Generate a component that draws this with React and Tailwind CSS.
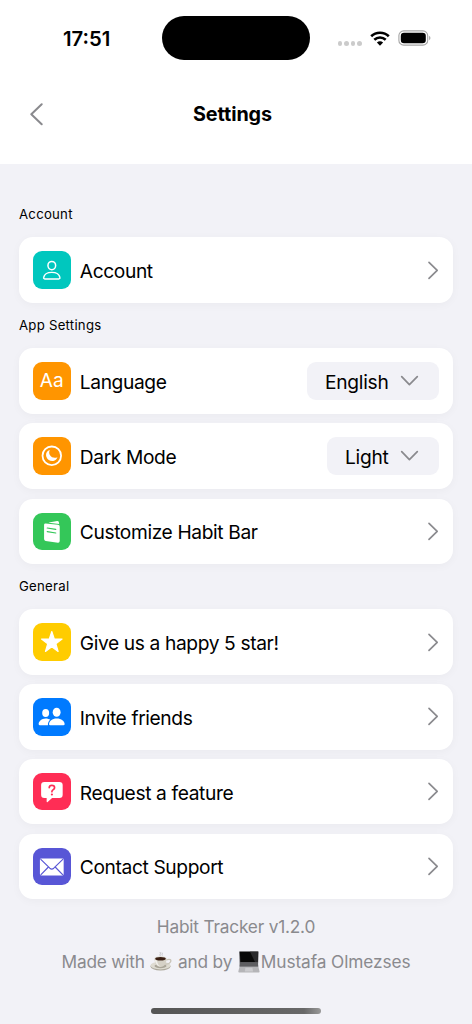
const BackIcon = () => (
  <svg className="w-[14px] h-[23px]" viewBox="0 0 14 23" fill="none" stroke="#8a8a8e" strokeWidth="2" strokeLinecap="round" strokeLinejoin="round">
    <path d="M12.7 1.2 L2.3 11.2 L12.7 21.3" />
  </svg>
)

const ChevronRight = () => (
  <svg className="w-3 h-[19px] shrink-0" viewBox="0 0 12 19" fill="none" stroke="#8a8a8e" strokeWidth="1.7" strokeLinecap="round" strokeLinejoin="round">
    <path d="M2 1.3 L10.2 9.3 L2 17.3" />
  </svg>
)

const ChevronDown = () => (
  <svg className="w-[19px] h-3 shrink-0" viewBox="0 0 19 12" fill="none" stroke="#8a8a8e" strokeWidth="1.7" strokeLinecap="round" strokeLinejoin="round">
    <path d="M1.7 1.6 L9.4 9.6 L17.3 1.6" />
  </svg>
)

// All tile icons share a 38x38 box
const PersonIcon = () => (
  <svg className="size-full" viewBox="0 0 38 38" fill="none" stroke="#fff" strokeWidth="1.5">
    <ellipse cx="19" cy="14.7" rx="3.9" ry="4.2" />
    <path d="M11.9 28.2 C11 28.2 10.6 27.5 10.8 26.7 C11.4 23.7 14.6 21.6 19 21.6 C23.4 21.6 26.6 23.7 27.2 26.7 C27.4 27.5 27 28.2 26.1 28.2 Z" />
  </svg>
)

const MoonIcon = () => (
  <svg className="size-full" viewBox="0 0 38 38" fill="none">
    <circle cx="19" cy="19" r="9.4" stroke="#fff" strokeWidth="1.8" />
    <path d="M17 13.2 C13.6 14.2 12.6 17.5 13.6 20.3 C15 24.2 20 25.5 23.1 22.9 C23.9 22.2 24.4 21.4 24.7 20.5 C21.9 21.7 18.6 20.9 17.2 18.5 C16.1 16.7 16.1 14.7 17 13.2 Z" fill="#fff" />
  </svg>
)

const PagesIcon = () => (
  <svg className="size-full" viewBox="0 0 38 38" fill="none">
    <path d="M16 9.6 L24.4 8 Q25.8 7.8 26.1 9.2 L26.5 11.1 L16 9.9 Z" fill="#fff" />
    <path d="M11.2 12 Q11.2 10.4 12.8 10.5 L25.2 11.9 Q27 12.2 27 13.8 L27 28.3 Q26.9 30.2 25.2 30 L12.8 28.2 Q11.2 28 11.2 26.3 Z" fill="#fff" />
    <path d="M14.4 15.2 L23 16.5 M14.4 18.9 L23 20.2" stroke="#34c759" strokeWidth="1.2" strokeLinecap="round" />
  </svg>
)

const StarIcon = () => (
  <svg className="size-full" viewBox="0 0 38 38" fill="#fff" stroke="#fff" strokeWidth="1.2" strokeLinejoin="round">
    <path d="M19 8.6 L21.5 16.1 L29.4 16.2 L23.1 20.9 L25.4 28.7 L19 24.1 L12.6 28.7 L14.9 20.9 L8.6 16.2 L16.5 16.1 Z" />
  </svg>
)

const FriendsIcon = () => (
  <svg className="size-full" viewBox="0 0 38 38" fill="#fff">
    <ellipse cx="12.8" cy="15.2" rx="3.5" ry="4" />
    <path d="M5.7 26.2 C5.7 23.6 8.7 20.6 12.8 20.6 C14.7 20.6 16.3 21.2 17.4 22 C15.7 23.4 14.9 25.2 15.1 27.6 L7 27.6 Q5.7 27.5 5.7 26.2 Z" />
    <ellipse cx="23.9" cy="14.4" rx="4" ry="4.6" />
    <path d="M16.2 26.2 C16.4 23.3 19.3 20.6 24 20.6 C28.8 20.6 31.8 23.3 32 26.2 Q32 27.5 30.7 27.6 L17.5 27.6 Q16.2 27.5 16.2 26.2 Z" />
  </svg>
)

const QuestionIcon = () => (
  <svg className="size-full" viewBox="0 0 38 38" fill="#fff">
    <path d="M11.5 9 L26.7 9 Q30 9 30 12.2 L30 22 Q30 25.2 26.7 25.2 L19.3 25.2 L14.8 29.2 Q13.8 29.9 13.8 28.6 L13.8 25.2 L11.5 25.2 Q8.2 25.2 8.2 22 L8.2 12.2 Q8.2 9 11.5 9 Z" />
    <path d="M16.4 14.8 C16.5 13.2 17.6 12.6 19 12.6 C20.7 12.6 21.8 13.4 21.8 14.8 C21.8 16.9 19.1 16.6 19.1 18.9" fill="none" stroke="#ff2d55" strokeWidth="1.7" strokeLinecap="round" />
    <circle cx="19.1" cy="21.7" r="1.1" fill="#ff2d55" />
  </svg>
)

const MailIcon = () => (
  <svg className="size-full" viewBox="0 0 38 38" fill="none">
    <rect x="7" y="10.7" width="24" height="17" rx="1.3" fill="#fff" />
    <path d="M7.6 11.3 L17 20.4 Q19 22.1 21 20.4 L30.4 11.3 M7.8 27.2 L15.6 19.2 M30.2 27.2 L22.4 19.2" stroke="#5856d6" strokeWidth="1.2" />
  </svg>
)

const CoffeeIcon = () => (
  <svg className="ml-px mr-px h-[22px] w-[22px] shrink-0" viewBox="0 0 22 22" fill="none">
    <path d="M10.5 5 C8.5 3.6 11.8 2.8 9.9 1 M12.3 4.6 C11.4 3.5 13 2.8 12 1.6" stroke="#b9b9bc" strokeWidth=".8" />
    <ellipse cx="10.5" cy="15.4" rx="10" ry="4.2" fill="#aaa69a" />
    <ellipse cx="10.5" cy="14.6" rx="10" ry="3.9" fill="#dedbd1" />
    <ellipse cx="10.5" cy="15" rx="6" ry="2.2" fill="#a9a598" />
    <path d="M16.2 9 C20 7.3 22 9 20.2 11.3 C19 12.9 17 13.2 15 13" stroke="#c9c5b9" strokeWidth="1.3" />
    <path d="M4.5 7.6 C4.5 12.3 6.5 16 10.5 16 C14.5 16 16.5 12.3 16.5 7.6 Z" fill="#d5d1c6" />
    <path d="M7 9.6 C7.5 13 8.5 14.7 10.5 15.4 C7.2 15.4 5.2 12.5 4.8 8.6 Z" fill="#f1efe9" />
    <ellipse cx="10.5" cy="7.6" rx="6.1" ry="2.4" fill="#dedbd2" />
    <ellipse cx="10.5" cy="7.7" rx="5.3" ry="1.8" fill="#3b2014" />
  </svg>
)

const LaptopIcon = () => (
  <svg className="ml-px mr-px h-[22px] w-[22px] shrink-0" viewBox="0 0 22 22">
    <path d="M1.2 0.4 H20.6 L20 15.5 H1.8 Z" fill="#4e4e50" />
    <path d="M1.8 0.8 H20 L19.4 11 H2.4 Z" fill="#080808" />
    <path d="M12 0.8 H20 L19.4 11 H17 Z" fill="#29292b" />
    <path d="M2.2 11.2 H19.7 L20.4 15.8 H1.5 Z" fill="#5e5e61" />
    <path d="M1.5 15.8 H20.4 L21.6 20.6 Q21.6 21.6 20.7 21.6 H1.2 Q0.3 21.6 0.3 20.6 Z" fill="#b5b5b8" />
    <path d="M7.4 16.8 H14.4 L15 20.6 H6.8 Z" fill="#cbcbce" />
  </svg>
)

const sections = [
  {
    title: 'Account',
    gap: 'gap-[9.6px]',
    rows: [{ label: 'Account', color: 'bg-[#00c7be]', icon: <PersonIcon /> }],
  },
  {
    title: 'App Settings',
    gap: 'gap-[9.6px]',
    rows: [
      {
        label: 'Language',
        color: 'bg-[#ff9500]',
        icon: <span className="pt-px text-[19px] text-white tracking-[0.1px]">Aa</span>,
        value: 'English',
      },
      { label: 'Dark Mode', color: 'bg-[#ff9500]', icon: <MoonIcon />, value: 'Light' },
      { label: 'Customize Habit Bar', color: 'bg-[#34c759]', icon: <PagesIcon /> },
    ],
  },
  {
    title: 'General',
    gap: 'gap-[9.1px]',
    rows: [
      { label: 'Give us a happy 5 star!', color: 'bg-[#ffcc00]', icon: <StarIcon /> },
      { label: 'Invite friends', color: 'bg-[#007aff]', icon: <FriendsIcon /> },
      { label: 'Request a feature', color: 'bg-[#ff2d55]', icon: <QuestionIcon /> },
      { label: 'Contact Support', color: 'bg-[#5856d6]', icon: <MailIcon /> },
    ],
  },
]

function StatusBar() {
  return (
    <div className="flex h-[76px] items-center">
      <div className="w-[162px] pl-[63px] pt-[2px] text-[20.3px] font-semibold">17:51</div>
      <div className="h-11 w-[148px] rounded-full bg-black" />
      <div className="ml-7 mt-[11px] flex gap-[2px]">
        {[0, 1, 2, 3].map((i) => (
          <span key={i} className="size-[4.4px] rounded-full bg-[#cbcbcb]" />
        ))}
      </div>
      <svg className="ml-2 h-[15px] w-5" viewBox="0 0 20 15" fill="none" stroke="#000" strokeWidth="2.6">
        <path d="M1.2 5.2 C6 0.6 14 0.6 18.8 5.2" />
        <path d="M4.3 8.8 C7.5 5.8 12.5 5.8 15.7 8.8" />
        <path d="M6.9 11.5 C8.7 9.9 11.3 9.9 13.1 11.5 L10 14.8 Z" fill="#000" stroke="none" />
      </svg>
      <svg className="ml-2 h-4 w-[33px]" viewBox="0 0 33 16" fill="none">
        <rect x="0.9" y="0.9" width="28.8" height="14.2" rx="4.7" stroke="#a5a5a5" strokeWidth="1.1" />
        <rect x="2.8" y="2.7" width="25" height="10.6" rx="3.2" fill="#000" />
        <path d="M31.1 5.8 C32.9 6.6 32.9 9.4 31.1 10.2 Z" fill="#a5a5a5" />
      </svg>
    </div>
  )
}

function Row({ label, color, icon, value }) {
  return (
    <div className="flex h-[65.7px] items-center rounded-[14px] bg-white px-[14px] shadow-[0_2px_10px_rgba(0,0,0,0.035)]">
      <div className={`flex size-[37.6px] shrink-0 items-center justify-center rounded-[9px] ${color}`}>{icon}</div>
      <span className="ml-[9.2px] flex-1 whitespace-nowrap pt-[2.6px] text-[19.2px] tracking-[-0.38px]">{label}</span>
      {value ? (
        <button className="flex h-[37.6px] items-center gap-[11.5px] rounded-[9px] bg-[#f2f2f7] pl-[18px] pr-5">
          <span className="pt-[2.6px] text-[19.2px] tracking-[-0.28px]">{value}</span>
          <ChevronDown />
        </button>
      ) : (
        <ChevronRight />
      )}
    </div>
  )
}

export default function App() {
  return (
    <div className="flex h-[1024px] w-[472px] flex-col overflow-hidden bg-[#f2f2f7] font-[Inter,sans-serif] text-black">
      <header className="h-[164px] shrink-0 bg-white">
        <StatusBar />
        <div className="flex h-[76px] items-center pl-[29px] pr-9">
          <div className="w-10">
            <BackIcon />
          </div>
          <h1 className="flex-1 pt-[2px] text-center text-[19.8px] font-bold tracking-[-0.1px]">Settings</h1>
          <div className="w-10" />
        </div>
      </header>

      <main className="flex flex-col px-[19px] pt-[28.3px]">
        {sections.map((s) => (
          <section key={s.title}>
            <h2 className="flex h-[45px] items-center text-[13.2px] tracking-[0.25px]">{s.title}</h2>
            <div className={`flex flex-col ${s.gap}`}>
              {s.rows.map((r) => (
                <Row key={r.label} {...r} />
              ))}
            </div>
          </section>
        ))}
      </main>

      <footer className="flex flex-col items-center text-[17.3px] tracking-[-0.2px] text-[#8a8a8e]">
        <p className="mt-4 leading-6">Habit Tracker v1.2.0</p>
        <p className="mt-[11px] flex items-center whitespace-pre leading-6">
          Made with <CoffeeIcon /> and by <LaptopIcon />
          <span className="tracking-[-0.1px]">Mustafa Olmezses</span>
        </p>
      </footer>
      <div className="mx-auto mb-[10px] mt-auto h-[6px] w-[170px] shrink-0 rounded-full bg-linear-to-r from-[#555] via-[#686868] via-90% to-[#999]" />
    </div>
  )
}
